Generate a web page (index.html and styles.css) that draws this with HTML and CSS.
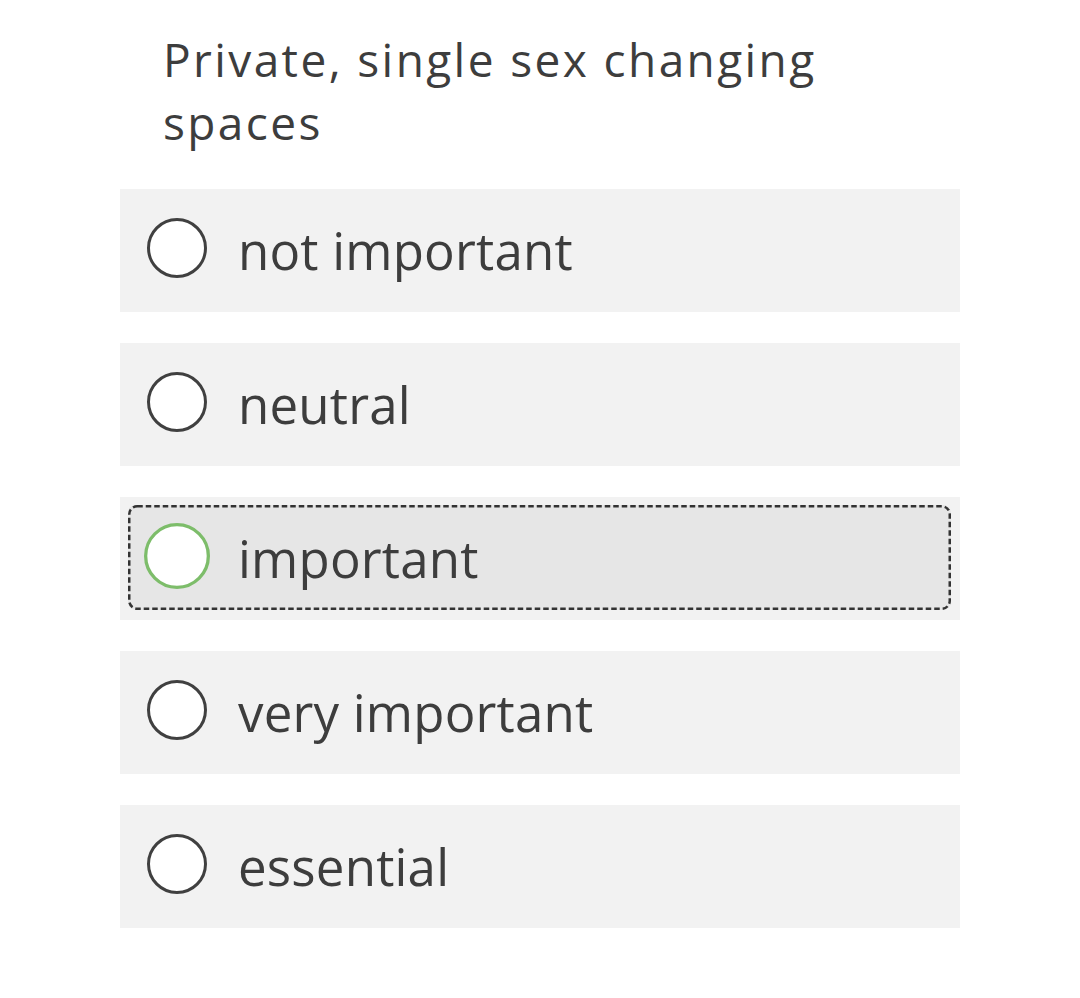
FILE: index.html
```html
<!DOCTYPE html>
<html lang="en">
<head>
<meta charset="utf-8">
<title>Question</title>
<link rel="stylesheet" href="styles.css">
</head>
<body>
<div class="question">
  <h2 class="title">Private, single sex changing<br>spaces</h2>
  <div class="options">
    <label class="option"><span class="inner"><span class="radio"></span><span class="label">not important</span></span></label>
    <label class="option"><span class="inner"><span class="radio"></span><span class="label">neutral</span></span></label>
    <label class="option focused"><span class="inner"><svg class="ring" aria-hidden="true"><rect rx="8" ry="8"></rect></svg><span class="radio"></span><span class="label">important</span></span></label>
    <label class="option"><span class="inner"><span class="radio"></span><span class="label">very important</span></span></label>
    <label class="option"><span class="inner"><span class="radio"></span><span class="label">essential</span></span></label>
  </div>
</div>
</body>
</html>
```
FILE: styles.css
```css
html, body {
  margin: 0;
  padding: 0;
  background: #ffffff;
}
body {
  font-family: "Open Sans", Roboto, "Liberation Sans", sans-serif;
  color: #3d3d3d;
}
.question {
  width: 840px;
  margin-left: 120px;
  padding-top: 28px;
}
.title {
  margin: 0 0 35px 43px;
  font-size: 46px;
  font-weight: 400;
  letter-spacing: 2.4px;
  line-height: 63px;
  color: #3d3d3d;
}
.options {
  display: flex;
  flex-direction: column;
  gap: 31px;
}
.option {
  display: block;
  height: 123px;
  box-sizing: border-box;
  padding: 8px 9px 10px 8px;
  background: #f2f2f2;
}
.inner {
  position: relative;
  display: flex;
  align-items: center;
  height: 100%;
  box-sizing: border-box;
  padding-left: 19px;
  border-radius: 8px;
}
.ring {
  position: absolute;
  left: 0;
  top: 0;
  width: 100%;
  height: 100%;
  overflow: visible;
  pointer-events: none;
}
.ring rect {
  x: 1.25px;
  y: 1.25px;
  width: calc(100% - 2.5px);
  height: calc(100% - 2.5px);
  fill: none;
  stroke: #333333;
  stroke-width: 2.5px;
  stroke-dasharray: 5.5 3;
}
.radio {
  flex: none;
  width: 60px;
  height: 60px;
  box-sizing: border-box;
  border: 3px solid #404040;
  border-radius: 50%;
  background: #ffffff;
  margin-right: 31px;
  margin-bottom: 4px;
}
.label {
  font-size: 51px;
  letter-spacing: 0.2px;
  line-height: 60px;
  color: #3d3d3d;
}
.focused .inner {
  background: #e6e6e6;
}
.focused .radio {
  border-color: #7dbd6a;
  transform: scale(1.1);
}
```
